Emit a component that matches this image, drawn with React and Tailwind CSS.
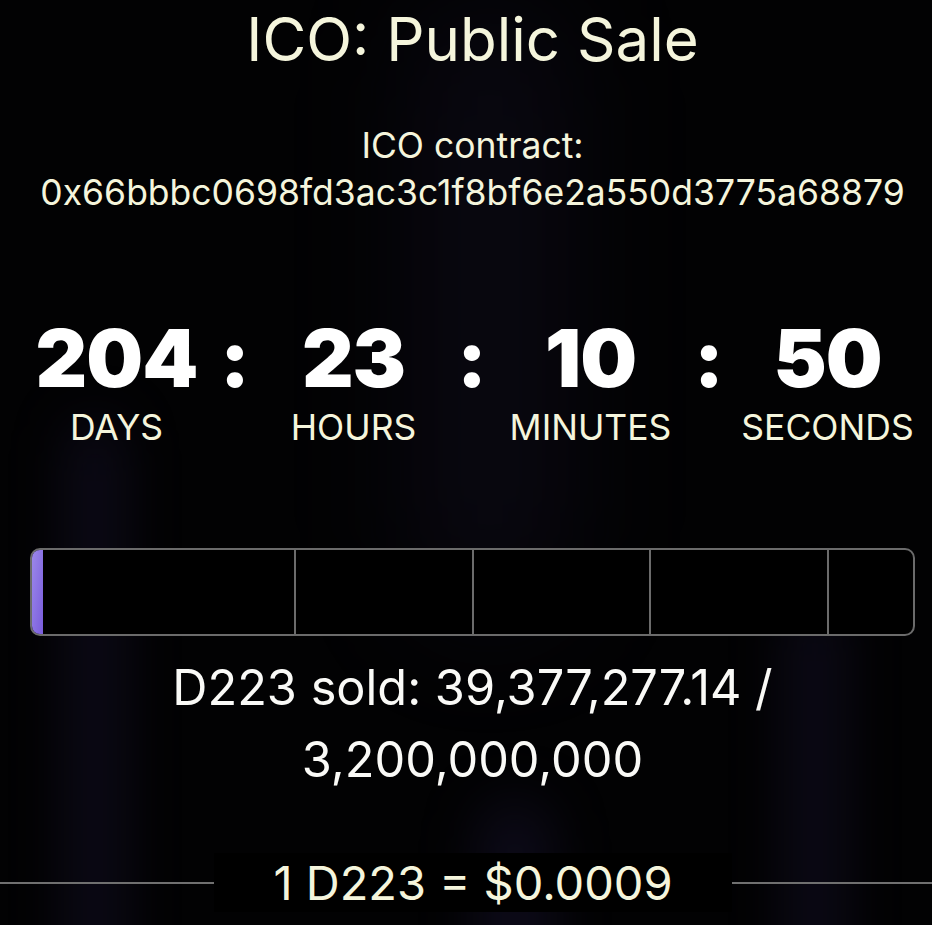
import React from "react";

const units = [
  { v: "204", l: "DAYS" },
  { v: "23", l: "HOURS" },
  { v: "10", l: "MINUTES" },
  { v: "50", l: "SECONDS" },
];

export default function App() {
  const sold = 39377277.14;
  const total = 3200000000;
  const pct = (sold / total) * 100;
  return (
    <div className="relative w-[932px] h-[925px] overflow-hidden bg-[#020203] font-['Inter',sans-serif]">
      {/* background glows */}
      <div className="pointer-events-none absolute inset-0">
        <div className="absolute left-[420px] top-[0px] w-[140px] h-[620px] rounded-full bg-[#17132a] opacity-40 blur-[60px]" />
        <div className="absolute left-[70px] top-[420px] w-[50px] h-[600px] rounded-full bg-[#1a1533] opacity-50 blur-[28px]" />
        <div className="absolute left-[790px] top-[600px] w-[50px] h-[400px] rounded-full bg-[#1a1533] opacity-50 blur-[28px]" />
        <div className="absolute left-[480px] top-[800px] w-[70px] h-[200px] rounded-full bg-[#1a1533] opacity-50 blur-[28px]" />
      </div>

      <div className="relative flex flex-col items-center pl-[13px]">
        <h1 className="mt-[3px] text-[60px] leading-[72px] font-normal text-[#f5f5dc] whitespace-nowrap">
          ICO: Public Sale
        </h1>

        <div className="mt-[47px] flex flex-col items-center text-[35.5px] leading-[47px] text-[#f5f5dc] whitespace-nowrap">
          <div>ICO contract:</div>
          <div>0x66bbbc0698fd3ac3c1f8bf6e2a550d3775a68879</div>
        </div>

        <div className="mt-[98px] flex self-start ml-[17px]">
          {units.map((u, i) => (
            <React.Fragment key={u.l}>
              {i > 0 && (
                <div className="w-[64px] shrink-0 flex justify-center text-[80px] leading-[88px] font-black text-white">
                  :
                </div>
              )}
              <div className="w-[173px] shrink-0 flex flex-col items-center">
                <div className="text-[80px] leading-[88px] font-black text-white tracking-[-1px]">{u.v}</div>
                <div className="mt-[6px] text-[35.5px] leading-[40px] text-[#f5f5dc] whitespace-nowrap">{u.l}</div>
              </div>
            </React.Fragment>
          ))}
        </div>

        <div className="mt-[100px] self-start ml-[17px] w-[885px] h-[88px] rounded-[10px] border-2 border-[#6b6b6b] bg-black relative overflow-hidden flex">
          <div className="w-[264px] shrink-0 border-r-2 border-[#6b6b6b]" />
          <div className="w-[178px] shrink-0 border-r-2 border-[#6b6b6b]" />
          <div className="w-[177px] shrink-0 border-r-2 border-[#6b6b6b]" />
          <div className="w-[178px] shrink-0 border-r-2 border-[#6b6b6b]" />
          <div className="flex-1" />
          <div
            className="absolute left-0 top-0 bottom-0 bg-gradient-to-br from-[#9c88ea] to-[#7a5cdc]"
            style={{ width: `${pct}%` }}
          />
        </div>

        <div className="mt-[16px] text-[48.7px] leading-[72px] text-[#fafaf7] text-center w-[800px]">
          D223 sold: 39,377,277.14 / 3,200,000,000
        </div>
      </div>

      <div className="relative mt-[57px] w-full flex items-center">
        <div className="w-[214px] shrink-0 h-[2px] bg-[#707070]" />
        <div className="w-[518px] shrink-0 h-[59px] bg-black flex items-center justify-center text-[47px] leading-[59px] text-[#f5f5dc] whitespace-nowrap">
          1 D223 = $0.0009
        </div>
        <div className="flex-1 h-[2px] bg-[#707070]" />
      </div>
    </div>
  );
}
